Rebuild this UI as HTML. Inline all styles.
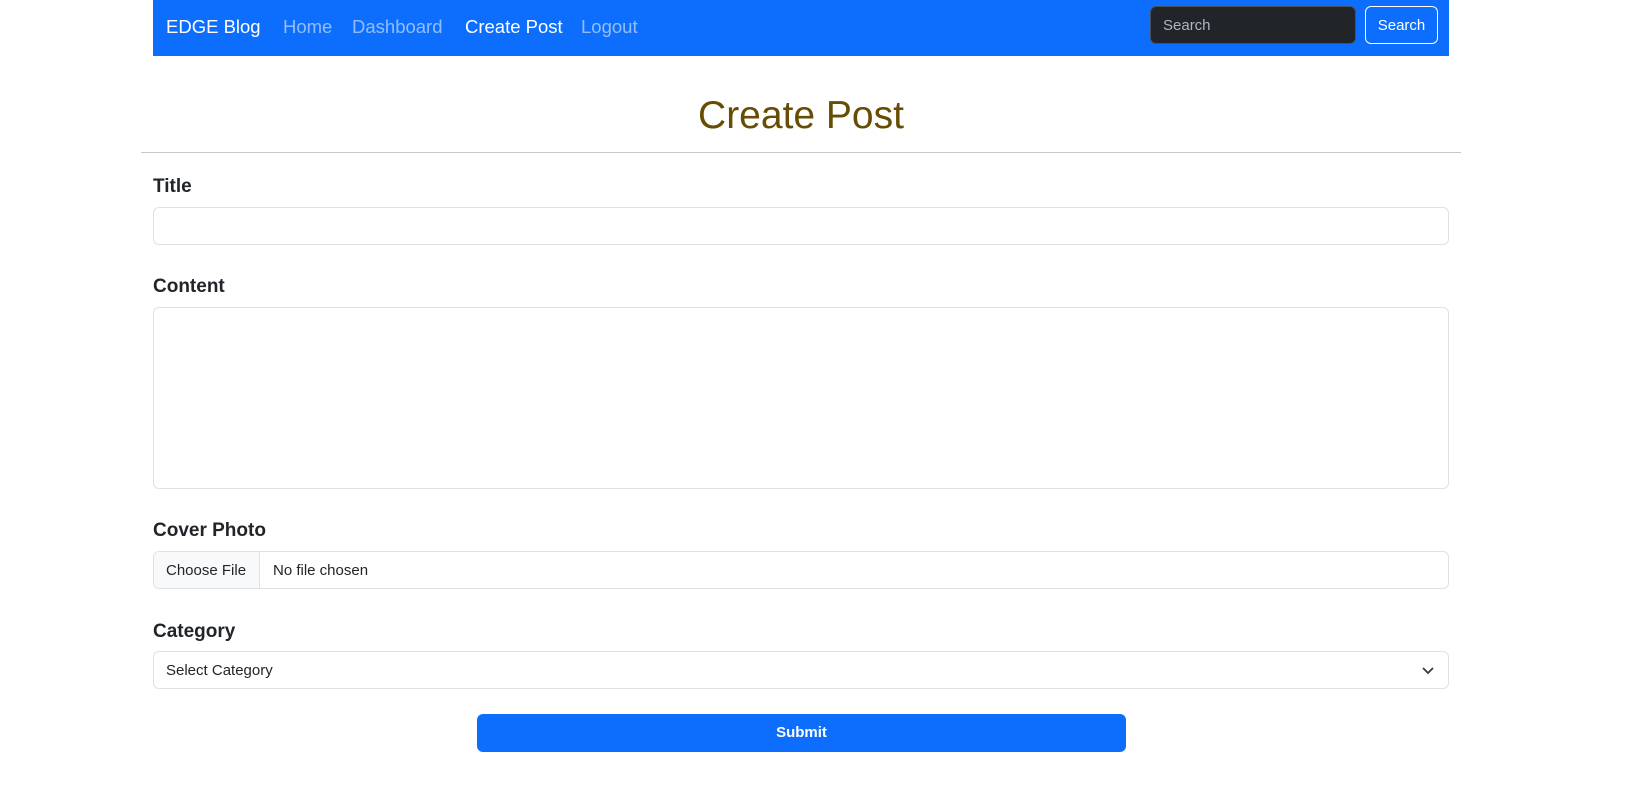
<!DOCTYPE html>
<html><head><meta charset="utf-8"><style>
*{box-sizing:border-box;margin:0;padding:0}
body{width:1634px;height:800px;background:#fff;font-family:"Liberation Sans",Arial,sans-serif;color:#212529;position:relative;overflow:hidden}
.abs{position:absolute}
nav{left:153px;top:0;width:1296px;height:56px;background:#0d6efd}
nav span{position:absolute;top:14px;font-size:18.5px;line-height:26px;color:rgba(255,255,255,.55)}
.sin{left:1150px;top:6px;width:206px;height:38px;background:#212529;border:1px solid #495057;border-radius:6px;color:#adb5bd;font-size:15px;padding:10px 12px}
.sbtn{left:1365px;top:6px;width:73px;height:38px;border:1px solid #fff;border-radius:6px;color:#fff;font-size:15px;text-align:center;line-height:38px}
h1{left:0;width:1602px;text-align:center;top:91px;font-size:39px;font-weight:500;color:#664d03;line-height:50px}
.hr{left:141px;top:152px;width:1320px;height:1px;background:#c8c8c8}
.lbl{left:153px;font-size:19px;font-weight:bold;line-height:24px}
.inp{left:153px;width:1296px;border:1px solid #dee2e6;border-radius:6px;background:#fff;font-size:15px}
.sub{left:477px;top:714px;width:649px;height:38px;background:#0d6efd;border-radius:6px;color:#fff;font-weight:bold;font-size:15px;text-align:center;line-height:38px}
</style></head><body>
<nav class="abs">
<span style="left:13px;color:#fff">EDGE Blog</span>
<span style="left:130px">Home</span>
<span style="left:199px">Dashboard</span>
<span style="left:312px;color:#fff">Create Post</span>
<span style="left:428px">Logout</span>
</nav>
<div class="abs sin">Search</div>
<div class="abs sbtn">Search</div>
<h1 class="abs">Create Post</h1>
<div class="abs hr"></div>
<div class="abs lbl" style="top:175px">Title</div>
<div class="abs inp" style="top:207px;height:38px"></div>
<div class="abs lbl" style="top:275px">Content</div>
<div class="abs inp" style="top:307px;height:182px"></div>
<div class="abs lbl" style="top:519px">Cover Photo</div>
<div class="abs inp" style="top:551px;height:38px;overflow:hidden">
<div style="position:absolute;left:0;top:0;width:106px;height:36px;background:#f8f9fa;border-right:1px solid #dee2e6;line-height:38px;padding-left:12px">Choose File</div>
<div style="position:absolute;left:119px;top:0;line-height:38px">No file chosen</div>
</div>
<div class="abs lbl" style="top:620px">Category</div>
<div class="abs inp" style="top:651px;height:38px;line-height:38px;padding-left:12px">Select Category
<svg style="position:absolute;right:14px;top:13px" width="12" height="10" viewBox="0 0 12 10"><path d="M1 3l5 5 5-5" fill="none" stroke="#343a40" stroke-width="1.8"/></svg>
</div>
<div class="abs sub">Submit</div>
</body></html>
